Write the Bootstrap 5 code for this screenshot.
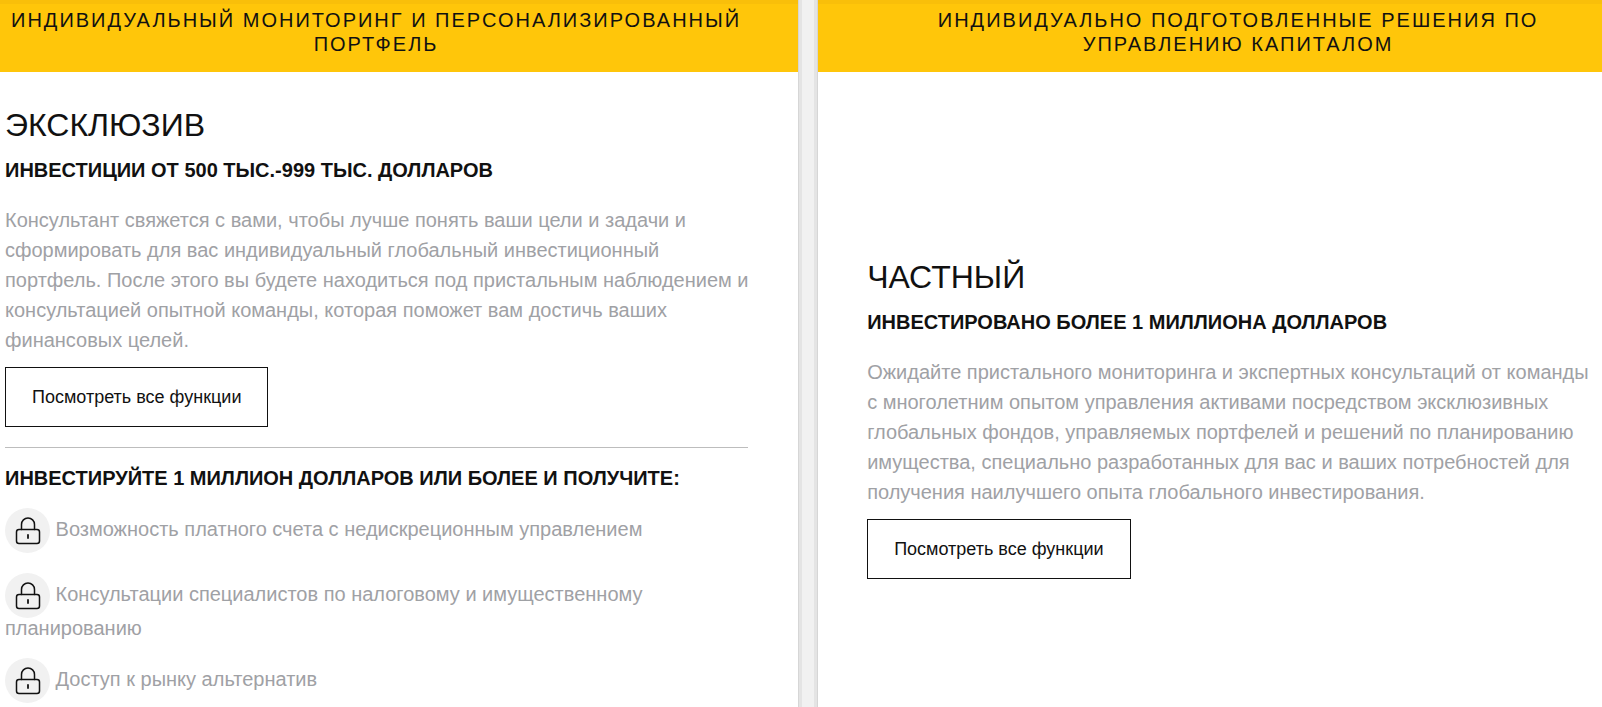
<!DOCTYPE html>
<html lang="ru">
<head>
<meta charset="utf-8">
<meta name="viewport" content="width=device-width, initial-scale=1">
<title>Инвестиционные программы</title>
<link href="https://cdn.jsdelivr.net/npm/bootstrap@5.3.0/dist/css/bootstrap.min.css" rel="stylesheet">
<style>
body{font-family:"Liberation Sans",Arial,sans-serif;font-size:20px;line-height:30px;color:#111;background:#fff}
.plans{grid-template-columns:56fr 20px 55fr}
.plan-banner{background:#ffc60a;border-top:4px solid #f9bf0a;padding:4px 46px 16px 0;font-size:20px;font-weight:400;line-height:24px;letter-spacing:2px}
.plan-private .plan-banner{padding-left:56px;padding-right:0}
.plan-body{padding:33px 30px 4px 5px}
.plan-private .plan-body{padding:185px 8px 4px 49px}
.plan-name{font-size:32px;line-height:40px;font-weight:400;margin-bottom:10px}
.plan-sum{font-size:20px;line-height:30px;font-weight:700;margin-bottom:20px}
.perks-title{margin-bottom:15px}
.plan-text{margin-bottom:12px}
.plan-text,.perks{color:#9fa1a5}
.plan-btn{--bs-btn-color:#111;--bs-btn-border-color:#111;--bs-btn-hover-bg:#111;--bs-btn-hover-color:#fff;height:60px;padding:0 26px;font-size:18px;border-radius:0}
.plan-rule{border-color:#999;opacity:.65;margin:20px 20px 15px 0}
.gutter{background:#f1f1f1;border:solid #d6d6d6;border-width:0 1px;box-shadow:inset 3px 0 #e4e4e4,inset -3px 0 #e4e4e4}
.perks{gap:20px}
.perks li{line-height:20px}
.lock{width:45px;height:45px;vertical-align:middle}
</style>
</head>
<body>
<svg class="d-none" aria-hidden="true">
<symbol id="lock" viewBox="0 0 45 45">
<circle cx="22.500" cy="22.500" r="22.500" fill="#f1f1f1"/>
<g fill="none" stroke="#111" stroke-width="1.500" stroke-linecap="round">
<rect x="11.500" y="21.500" width="23" height="14" rx="2.500"/>
<path d="M16.500 21.500V16.500a6.500 6.500 0 0 1 13 0V21.500"/>
<path d="M23 27v3" stroke-width="1.800"/>
</g>
</symbol>
</svg>
<main class="plans d-grid min-vh-100">
<section class="plan-exclusive">
<h2 class="plan-banner text-center text-uppercase mb-0">Индивидуальный мониторинг и персонализированный портфель</h2>
<div class="plan-body">
<h3 class="plan-name text-uppercase">Эксклюзив</h3>
<h4 class="plan-sum text-uppercase">Инвестиции от 500 тыс.-999 тыс. долларов</h4>
<p class="plan-text">Консультант свяжется с вами, чтобы лучше понять ваши цели и задачи и сформировать для вас индивидуальный глобальный инвестиционный<br>портфель. После этого вы будете находиться под пристальным наблюдением и консультацией опытной команды, которая поможет вам достичь ваших финансовых целей.</p>
<button type="button" class="btn plan-btn">Посмотреть все функции</button>
<hr class="plan-rule">
<h4 class="plan-sum perks-title text-uppercase">Инвестируйте 1 миллион долларов или более и получите:</h4>
<ul class="perks list-unstyled mb-0 d-grid">
<li><svg class="lock" aria-hidden="true"><use href="#lock"/></svg> Возможность платного счета с недискреционным управлением</li>
<li><svg class="lock" aria-hidden="true"><use href="#lock"/></svg> Консультации специалистов по налоговому и имущественному планированию</li>
<li><svg class="lock" aria-hidden="true"><use href="#lock"/></svg> Доступ к рынку альтернатив</li>
</ul>
</div>
</section>
<div class="gutter"></div>
<section class="plan-private">
<h2 class="plan-banner text-center text-uppercase mb-0">Индивидуально подготовленные решения по управлению капиталом</h2>
<div class="plan-body">
<h3 class="plan-name text-uppercase">Частный</h3>
<h4 class="plan-sum text-uppercase">Инвестировано более 1 миллиона долларов</h4>
<p class="plan-text">Ожидайте пристального мониторинга и экспертных консультаций от команды с многолетним опытом управления активами посредством эксклюзивных глобальных фондов, управляемых портфелей и решений по планированию имущества, специально разработанных для вас и ваших потребностей для получения наилучшего опыта глобального инвестирования.</p>
<button type="button" class="btn plan-btn">Посмотреть все функции</button>
</div>
</section>
</main>
<script src="https://cdn.jsdelivr.net/npm/bootstrap@5.3.0/dist/js/bootstrap.bundle.min.js"></script>
</body>
</html>
